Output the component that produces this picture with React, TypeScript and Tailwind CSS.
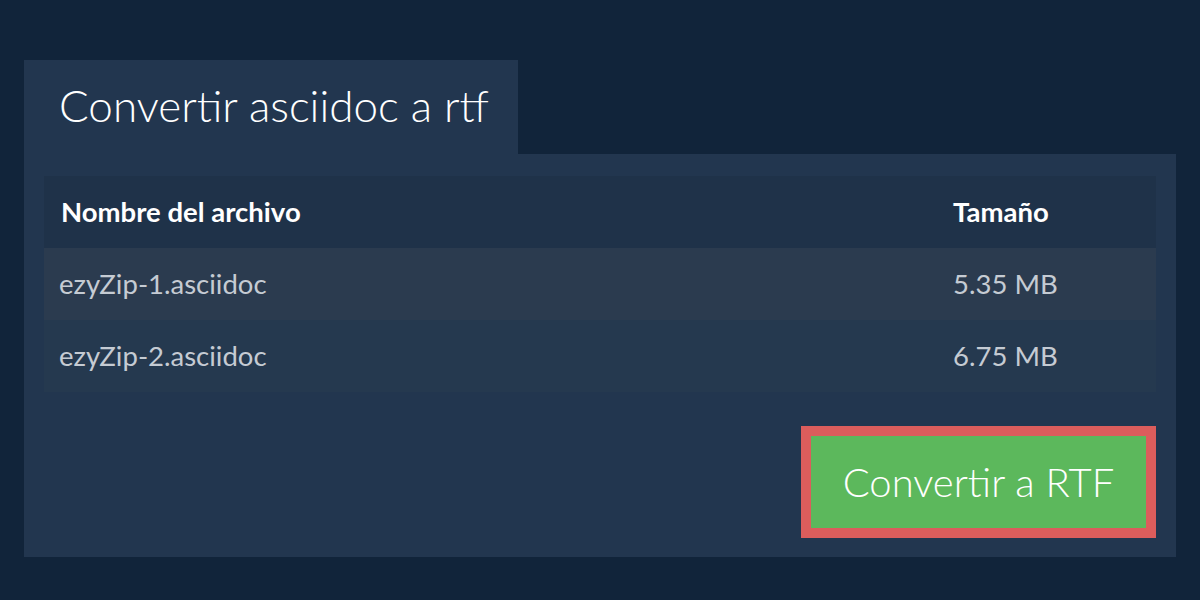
const files = [
  { name: 'ezyZip-1.asciidoc', size: '5.35 MB' },
  { name: 'ezyZip-2.asciidoc', size: '6.75 MB' },
]

export default function App() {
  return (
    <div className="h-[600px] w-[1200px] bg-[#11243a] px-6 pt-[60px] font-['Lato',sans-serif]">
      <div className="flex h-[94px] w-[494px] items-center bg-[#22364f] pl-[35px] pb-1">
        <h1 className="text-[44px] font-light leading-none text-white">Convertir asciidoc a rtf</h1>
      </div>
      <div className="flex h-[403px] flex-col bg-[#22364f] px-5 pt-[22px]">
        <table className="w-full border-collapse text-left">
          <thead>
            <tr className="h-[72px] bg-[#1f3249] text-[27.5px] font-bold text-white">
              <th className="pl-[17px] font-bold">Nombre del archivo</th>
              <th className="w-[203px] font-bold">Tamaño</th>
            </tr>
          </thead>
          <tbody className="text-[27.5px] text-[#c5cbd3]">
            {files.map((f, i) => (
              <tr key={f.name} className={`h-[72px] ${i === 0 ? 'bg-[#2b3b4f]' : 'bg-[#25394f]'}`}>
                <td className="pl-[15px]">{f.name}</td>
                <td>{f.size}</td>
              </tr>
            ))}
          </tbody>
        </table>
        <div className="mt-[34px] flex justify-end">
          <button className="h-[112px] w-[355px] border-[10px] border-[#dc5d5c] bg-[#5cb85c] text-[40px] font-light text-white">
            Convertir a RTF
          </button>
        </div>
      </div>
    </div>
  )
}
